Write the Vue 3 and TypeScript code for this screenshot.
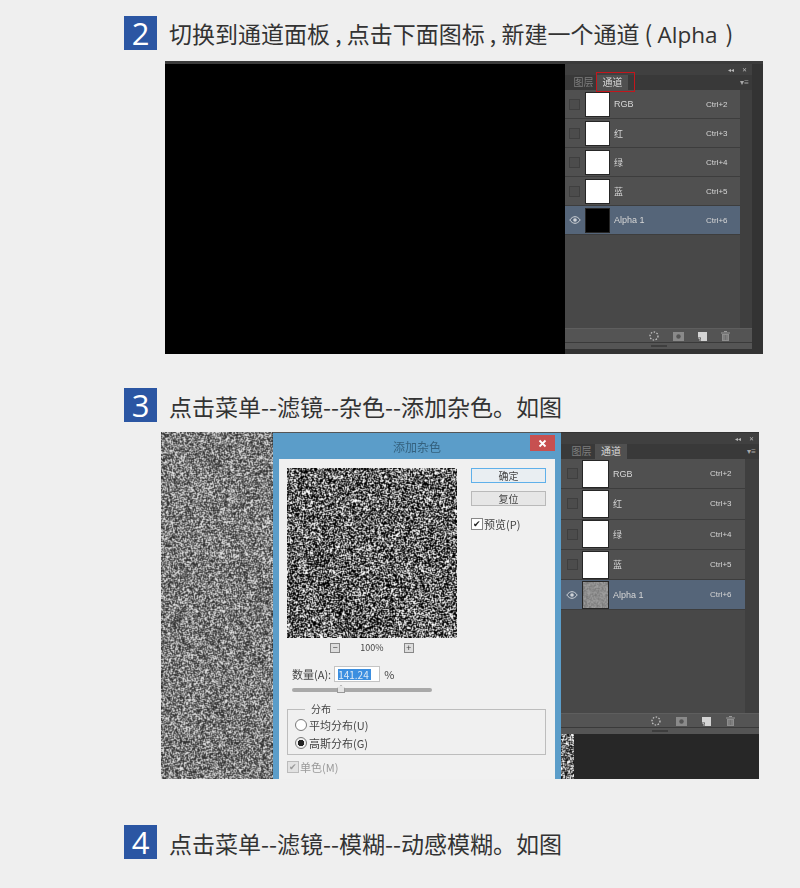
<script setup lang="ts">
import type { Directive } from 'vue'

type Kind = 'field' | 'preview' | 'thumb' | 'edge'

interface Step {
  n: number
  text: string
  latin?: string
  tail?: string
  shot?: 'a' | 'b'
}

const steps: Step[] = [
  { n: 2, text: '切换到通道面板 , 点击下面图标 , 新建一个通道 ( ', latin: 'Alpha', tail: ' )', shot: 'a' },
  { n: 3, text: '点击菜单--滤镜--杂色--添加杂色。如图', shot: 'b' },
  { n: 4, text: '点击菜单--滤镜--模糊--动感模糊。如图' },
]

const channels = [
  { name: 'RGB', key: 'Ctrl+2' },
  { name: '红', key: 'Ctrl+3' },
  { name: '绿', key: 'Ctrl+4' },
  { name: '蓝', key: 'Ctrl+5' },
  { name: 'Alpha 1', key: 'Ctrl+6', active: true },
]

// seeded so every run gives the same grain
function rng(seed: number) {
  return () => {
    seed = (seed + 0x6d2b79f5) | 0
    let t = Math.imul(seed ^ (seed >>> 15), 1 | seed)
    t = (t + Math.imul(t ^ (t >>> 7), 61 | t)) ^ t
    return ((t ^ (t >>> 14)) >>> 0) / 4294967296
  }
}

function shade(kind: Kind, r: number): number {
  if (kind === 'thumb') return 115 + r * 50
  if (kind === 'preview') return r < 0.46 ? 0 : r < 0.72 ? 125 : 255
  if (kind === 'edge') return r < 0.4 ? 15 : r < 0.7 ? 125 : 255
  return r < 0.36 ? 50 : r < 0.72 ? 125 : 225
}

const vNoise: Directive<HTMLCanvasElement, Kind> = {
  mounted(el, { value }) {
    const ctx = el.getContext('2d')
    if (!ctx) return
    const w = el.width
    const h = el.height
    const img = ctx.createImageData(w, h)
    const rand = rng(w * 31 + h)
    const raw = Array.from({ length: w * h }, () => shade(value, rand()))
    // the source was downscaled, so each grain leaks into its neighbours
    const at = (x: number, y: number) => raw[Math.min(h - 1, Math.max(0, y)) * w + Math.min(w - 1, Math.max(0, x))]
    for (let y = 0; y < h; y++) {
      for (let x = 0; x < w; x++) {
        const v = at(x, y) * 0.52 + (at(x - 1, y) + at(x + 1, y) + at(x, y - 1) + at(x, y + 1)) * 0.12
        const i = (y * w + x) * 4
        img.data[i] = v
        img.data[i + 1] = v
        img.data[i + 2] = v
        img.data[i + 3] = 255
      }
    }
    ctx.putImageData(img, 0, 0)
  },
}
</script>

<template>
  <main class="page">
    <section v-for="step in steps" :key="step.n" class="step" :class="`step-${step.n}`">
      <header class="step-head">
        <span class="badge">{{ step.n }}</span>
        <h2 class="title">{{ step.text }}<span v-if="step.latin" class="latin">{{ step.latin }}</span>{{ step.tail }}</h2>
      </header>

      <div v-if="step.shot" class="shot" :class="`shot-${step.shot}`">
        <div v-if="step.shot === 'a'" class="canvas-black"></div>

        <template v-else>
          <canvas v-noise="'field'" class="field" width="112" height="347"></canvas>
          <div class="dialog">
            <div class="dialog-bar">
              <span class="dialog-title">添加杂色</span>
              <span class="dialog-close">
                <svg width="9" height="9" viewBox="0 0 9 9">
                  <path d="M1.5 1.5l6 6M7.5 1.5l-6 6" stroke="#fff" stroke-width="1.8" />
                </svg>
              </span>
            </div>
            <div class="dialog-body">
              <div class="dialog-top">
                <div class="preview-col">
                  <canvas v-noise="'preview'" class="preview" width="170" height="170"></canvas>
                  <div class="zoom-row">
                    <span class="zoom-btn">−</span>
                    <span>100%</span>
                    <span class="zoom-btn">+</span>
                  </div>
                </div>
                <div class="dialog-actions">
                  <button class="btn btn-primary">确定</button>
                  <button class="btn">复位</button>
                  <label class="check-row">
                    <span class="check">✔</span>
                    预览(P)
                  </label>
                </div>
              </div>
              <div class="amount-row">
                <span>数量(A):</span>
                <span class="amount-input"><span class="amount-sel">141.24</span></span>
                <span>%</span>
              </div>
              <div class="slider"><span class="slider-thumb"></span></div>
              <fieldset class="dist">
                <legend>分布</legend>
                <label class="radio-row"><span class="radio"></span>平均分布(U)</label>
                <label class="radio-row"><span class="radio radio-on"></span>高斯分布(G)</label>
              </fieldset>
              <label class="check-row check-mono">
                <span class="check check-dim">✔</span>
                单色(M)
              </label>
            </div>
          </div>
        </template>

        <div class="panel-wrap">
          <div class="panel">
            <div class="panel-top">
              <span class="collapse">◂◂</span>
              <span class="collapse">✕</span>
            </div>
            <div class="tabs">
              <span class="tab">图层</span>
              <span class="tab tab-on">通道</span>
              <span class="tab-menu">▾≡</span>
              <span v-if="step.shot === 'a'" class="tab-mark"></span>
            </div>
            <div class="panel-main">
              <div class="rows">
                <div v-for="c in channels" :key="c.key" class="row" :class="{ 'row-on': c.active }">
                  <span class="vis">
                    <svg v-if="c.active" width="12" height="8" viewBox="0 0 12 8">
                      <path d="M.8 4C2.5 1.6 4.2.7 6 .7S9.500 1.600 11.200 4C9.500 6.400 7.800 7.300 6 7.300S2.500 6.400.8 4z" fill="none" stroke="#cfd3d8" />
                      <circle cx="6" cy="4" r="1.800" fill="#cfd3d8" />
                    </svg>
                    <span v-else class="vis-box"></span>
                  </span>
                  <span v-if="!c.active" class="thumb"></span>
                  <span v-else-if="step.shot === 'a'" class="thumb thumb-black"></span>
                  <canvas v-else v-noise="'thumb'" class="thumb" width="25" height="26"></canvas>
                  <span class="row-name">{{ c.name }}</span>
                  <span class="row-key">{{ c.key }}</span>
                </div>
              </div>
              <div class="scroll-col"></div>
            </div>
            <div class="panel-foot">
              <svg width="10" height="10" viewBox="0 0 10 10">
                <circle cx="5" cy="5" r="4" fill="none" stroke="#cfcfcf" stroke-width="1.200" stroke-dasharray="1.500 1.500" />
              </svg>
              <svg width="11" height="9" viewBox="0 0 11 9">
                <rect width="11" height="9" fill="#8a8a8a" />
                <circle cx="5.500" cy="4.500" r="2.200" fill="#555" />
              </svg>
              <svg width="9" height="9" viewBox="0 0 9 9">
                <path d="M0 0h9v9H3V5.500H0z" fill="#d4d4d4" />
                <path d="M.5 6.500h1.500V9" fill="none" stroke="#bbb" />
              </svg>
              <svg width="9" height="10" viewBox="0 0 9 10">
                <path d="M3 .5h3M0 2h9" stroke="#9a9a9a" />
                <path d="M1 3h7v7H1z" fill="#8e8e8e" />
                <path d="M3 4v5M4.500 4v5M6 4v5" stroke="#5c5c5c" stroke-width=".6" />
              </svg>
            </div>
            <div class="panel-grip"><span></span></div>
          </div>
          <div v-if="step.shot === 'b'" class="under-panel">
            <canvas v-noise="'edge'" class="edge" width="13" height="45"></canvas>
          </div>
        </div>
      </div>
    </section>
  </main>
</template>

<style scoped>
.page {
  padding: 16px 0 29px 124px;
  color: #333;
  font-family: "Noto Sans CJK SC", "Noto Sans", sans-serif;
}

.step-3 { margin-top: 34px; }
.step-4 { margin-top: 46px; }

.step-head {
  display: flex;
  align-items: center;
  height: 34px;
  gap: 12px;
}

.badge {
  width: 33px;
  height: 34px;
  background: #2b56a3;
  color: #fff;
  font-family: "Open Sans", sans-serif;
  font-size: 31px;
  font-weight: 400;
  line-height: 34px;
  text-align: center;
}

.title {
  margin: 0;
  padding-top: 2px;
  font-size: 23px;
  font-weight: 400;
  line-height: 34px;
  white-space: pre;
}

.latin {
  margin-right: 3px;
  font-family: "Open Sans", sans-serif;
  font-size: 22.500px;
}

.shot {
  display: flex;
  width: 598px;
  overflow: hidden;
  background: #000;
  filter: blur(0.4px);
}

.shot-a {
  height: 293px;
  margin: 11px 0 0 41px;
  border-top: 3px solid #3b3b3b;
  box-sizing: border-box;
}

.shot-b {
  height: 347px;
  margin: 10px 0 0 37px;
  background: #555;
}

.canvas-black {
  width: 400px;
  flex: none;
}

.field {
  display: block;
  flex: none;
}

/* filter dialog */
.dialog {
  width: 288px;
  height: 360px;
  flex: none;
  margin-top: 1px;
  padding: 0 6px 0 6px;
  box-sizing: border-box;
  background: #5b9dc9;
}

.dialog-bar {
  display: flex;
  justify-content: center;
  align-items: center;
  position: relative;
  height: 26px;
  color: #34617e;
  font-size: 12px;
}

.dialog-close {
  position: absolute;
  top: 2px;
  right: 0;
  width: 25px;
  height: 16px;
  background: #c75050;
  display: flex;
  align-items: center;
  justify-content: center;
}

.dialog-body {
  height: 330px;
  padding: 9px 8px 0;
  background: #f0f0f0;
  font-size: 11px;
  color: #444;
}

.dialog-top {
  display: flex;
  gap: 14px;
}

.preview {
  display: block;
  width: 170px;
  height: 170px;
}

.zoom-row {
  display: flex;
  justify-content: center;
  align-items: center;
  gap: 20px;
  height: 18px;
  padding-top: 1px;
  font-size: 9px;
  box-sizing: border-box;
}

.zoom-btn {
  width: 8px;
  height: 8px;
  border: 1px solid #888;
  background: #ddd;
  font-size: 9px;
  line-height: 8px;
  text-align: center;
}

.dialog-actions {
  display: flex;
  flex-direction: column;
  width: 75px;
}

.btn {
  height: 15px;
  margin-bottom: 8px;
  padding: 0;
  border: 1px solid #b9b9b9;
  background: #e6e6e6;
  color: #444;
  font-size: 10px;
  font-family: inherit;
  line-height: 13px;
}

.btn-primary {
  border-color: #5fb0ea;
  background: #e9eef2;
}

.check-row {
  display: flex;
  align-items: center;
  gap: 1px;
  height: 12px;
  margin-top: 4px;
}

.check {
  width: 10px;
  height: 10px;
  border: 1px solid #888;
  background: #fff;
  color: #222;
  font-size: 9px;
  line-height: 10px;
  text-align: center;
}

.check-dim {
  background: #e2e2e2;
  border-color: #bbb;
  color: #999;
}

.check-mono {
  margin-top: 6px;
  color: #999;
}

.amount-row {
  display: flex;
  align-items: center;
  gap: 3px;
  height: 16px;
  margin: 10px 0 0 5px;
}

.amount-input {
  width: 46px;
  height: 16px;
  border: 1px solid #c4c4c4;
  background: #fff;
  margin-right: 1px;
  padding: 2px 0 0 3px;
  box-sizing: border-box;
  line-height: 11px;
}

.amount-sel {
  display: inline-block;
  width: 33px;
  background: #3c8fe0;
  color: #dfeaf5;
  font-size: 10px;
  line-height: 11px;
}

.slider {
  position: relative;
  width: 140px;
  height: 4px;
  margin: 6px 0 0 5px;
  border-radius: 2px;
  background: #a9a9a9;
}

.slider-thumb {
  position: absolute;
  left: 45px;
  top: -3px;
  width: 8px;
  height: 8px;
  background: #e4e4e4;
  border: 1px solid #999;
  box-sizing: border-box;
  clip-path: polygon(50% 0, 100% 40%, 100% 100%, 0 100%, 0 40%);
}

.dist {
  width: 259px;
  height: 51px;
  box-sizing: border-box;
  margin: 12px 0 0;
  padding: 3px 7px 0;
  border: 1px solid #bdbdbd;
}

.dist legend {
  margin-left: 10px;
  padding: 0 6px;
  font-size: 10px;
  line-height: 10px;
}

.radio-row {
  display: flex;
  align-items: center;
  gap: 2px;
  height: 18px;
  margin-top: -1px;
}

.radio-row + .radio-row { margin-top: 0; }

.radio {
  width: 10px;
  height: 10px;
  border: 1px solid #777;
  border-radius: 50%;
  background: #fff;
}

.radio-on {
  background: radial-gradient(circle, #222 0 3px, #eee 3.5px);
}

/* channels panel */
.panel-wrap {
  display: flex;
  flex-direction: column;
  flex: 1;
  min-width: 0;
  background: #333;
}

.panel {
  display: flex;
  flex-direction: column;
  background: #484848;
  color: #d6d6d6;
  font-size: 9px;
  font-family: "Liberation Sans", "Noto Sans CJK SC", sans-serif;
}

.shot-a .panel {
  width: 187px;
  height: 285px;
}

.shot-b .panel {
  height: 301px;
  margin-top: 1px;
}

.panel-top {
  display: flex;
  justify-content: flex-end;
  align-items: center;
  gap: 8px;
  height: 11px;
  padding-right: 5px;
  background: #404040;
  font-size: 6px;
  color: #b8b8b8;
}

.tabs {
  position: relative;
  display: flex;
  align-items: flex-end;
  height: 15px;
  padding-left: 5px;
  background: #393939;
  color: #7e7e7e;
  font-size: 10px;
}

.shot-b .tabs { padding-left: 7px; }

.tab {
  width: 27px;
  height: 15px;
  line-height: 16px;
  text-align: center;
}

.tab-on {
  width: 31px;
  background: #505050;
  color: #d8d8d8;
}

.shot-b .tab-on { width: 32px; }

.tab-menu {
  margin-left: auto;
  padding-right: 3px;
  align-self: center;
  font-size: 8px;
  color: #a8a8a8;
}

.tab-mark {
  position: absolute;
  left: 31px;
  top: -3px;
  width: 39px;
  height: 20px;
  border: 1px solid #c4161c;
  box-sizing: border-box;
}

.panel-main {
  display: flex;
  flex: 1;
  min-height: 0;
  background: #484848;
}

.rows { flex: 1; }

.row {
  display: flex;
  align-items: center;
  background: #505050;
  border-bottom: 1px solid #3d3d3d;
  box-sizing: border-box;
}

.shot-a .row { height: 29px; }
.shot-b .row { height: 30.3px; }

.row-on { background: #556579; }

.vis {
  display: flex;
  justify-content: center;
  flex: none;
}

.shot-a .vis { width: 19px; margin-right: 2px; }
.shot-b .vis { width: 22px; }

.vis-box {
  width: 9px;
  height: 9px;
  border: 1px solid #3f3f3f;
  background: #4c4c4c;
}

.thumb {
  display: block;
  flex: none;
  background: #fff;
  outline: 1px solid #262626;
}

.shot-a .thumb { width: 23px; height: 23px; }
.shot-b .thumb { width: 25px; height: 26px; }

.thumb-black { background: #000; }

.row-name {
  flex: 1;
  padding-left: 5px;
}

.row-key {
  font-size: 8px;
}

.shot-a .row-key { width: 34px; }
.shot-b .row-key { width: 35px; }

.scroll-col {
  flex: none;
  background: #3f3f3f;
}

.shot-a .scroll-col { width: 12px; }
.shot-b .scroll-col { width: 14px; }

.panel-foot {
  display: flex;
  align-items: center;
  justify-content: flex-end;
  height: 15px;
  padding-top: 1px;
  box-sizing: border-box;
  background: #545454;
  border-top: 1px solid #5e5e5e;
  border-bottom: 1px solid #3a3a3a;
}

.shot-a .panel-foot { padding-right: 22px; gap: 14px; }
.shot-b .panel-foot { padding-right: 24px; gap: 15px; }

.panel-grip {
  display: flex;
  justify-content: center;
  align-items: center;
  height: 6px;
  background: #555;
}

.panel-grip span {
  width: 16px;
  height: 2px;
  background: #3e3e3e;
}

.under-panel {
  flex: 1;
  background: #272727;
}

.edge {
  display: block;
}
</style>

<style>
body {
  background: #efefef;
}
</style>
